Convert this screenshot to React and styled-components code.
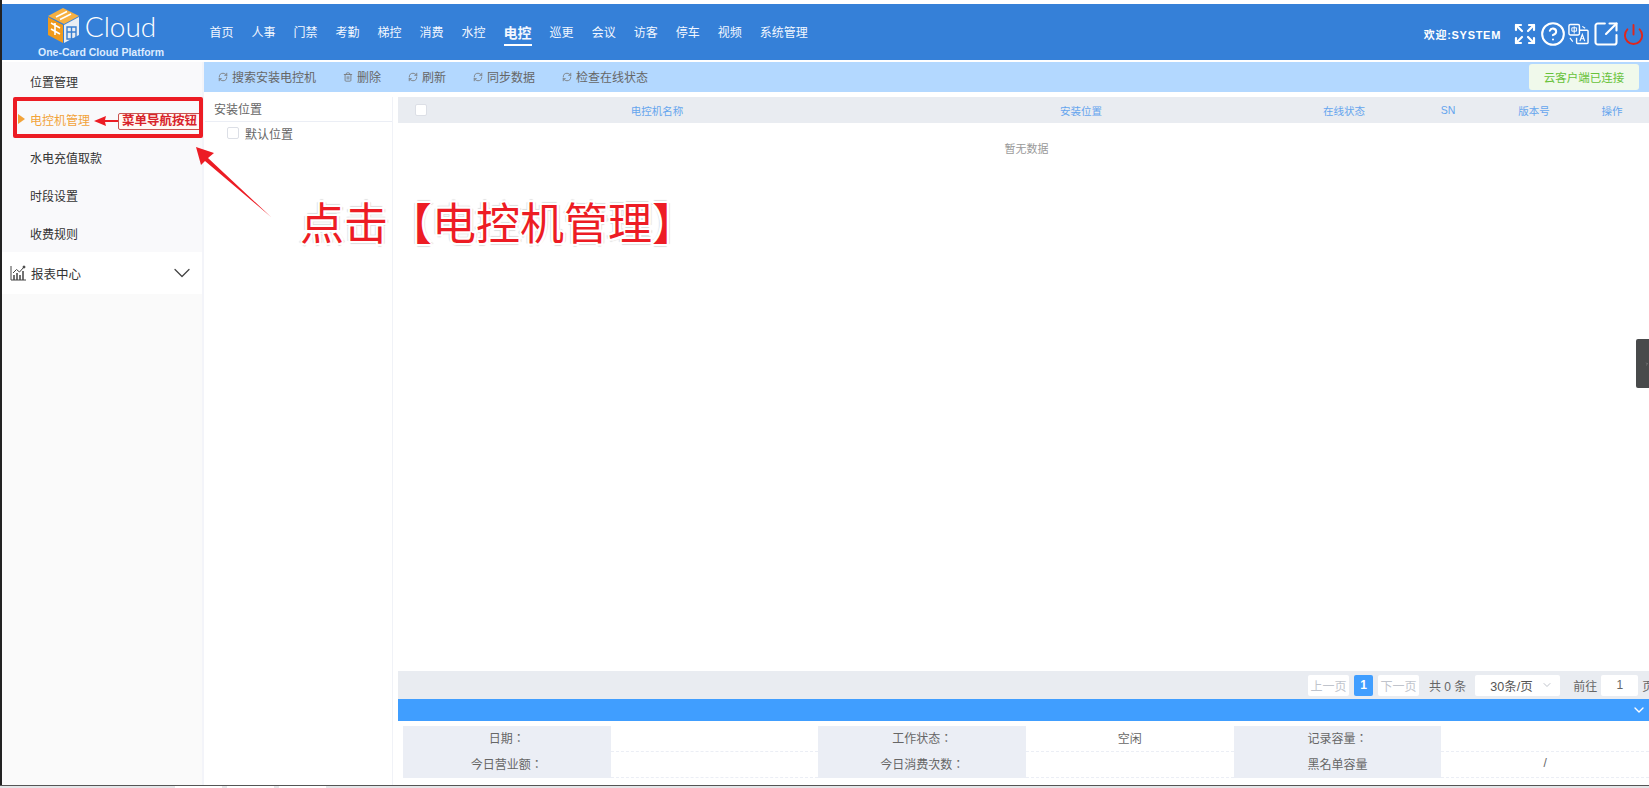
import React from "react";
import styled, { createGlobalStyle } from "styled-components";
import {
  Expand,
  CircleHelp,
  SquareArrowOutUpRight,
  Power,
  RefreshCw,
  Trash2,
  ChevronDown,
  ChevronRight,
} from "lucide-react";

const navItems = ["首页", "人事", "门禁", "考勤", "梯控", "消费", "水控", "电控", "巡更", "会议", "访客", "停车", "视频", "系统管理"];
const menuItems = ["位置管理", "电控机管理", "水电充值取款", "时段设置", "收费规则"];

const GlobalStyle = createGlobalStyle`
  html, body {
    margin: 0;
    padding: 0;
    background: #fff;
    overflow: hidden;
  }
  * {
    box-sizing: border-box;
  }
  body {
    font-family: "Liberation Sans", "Noto Sans CJK SC", sans-serif;
    font-size: 12px;
  }
`;

const Page = styled.div`
  position: relative;
  width: 1649px;
  height: 788px;
  overflow: hidden;
`;

const Shell = styled.div`
  width: 100%;
  height: 100%;
  display: flex;
  flex-direction: column;
  padding-top: 4px;
  border-left: 2px solid #222;
`;

const Header = styled.header`
  height: 56px;
  flex: none;
  display: flex;
  align-items: flex-start;
  background: #3580d8;
  color: #fff;
`;

const Brand = styled.div`
  width: 198px;
  flex: none;
  display: flex;
  flex-direction: column;
  align-items: center;
  padding-top: 4px;
`;

const BrandTop = styled.div`
  height: 35px;
  margin-left: 2px;
  display: flex;
  align-items: center;
  gap: 6px;
`;

const CloudWord = styled.span`
  font-family: "Lato", "Liberation Sans", sans-serif;
  font-weight: 300;
  font-size: 28px;
  line-height: 32px;
  color: #fff;
`;

const Slogan = styled.div`
  margin-top: 2px;
  font-size: 10.5px;
  line-height: 14px;
  font-weight: 700;
  color: #dcecff;
  white-space: nowrap;
`;

const Nav = styled.nav`
  margin-left: 9.5px;
  height: 100%;
  display: flex;
  align-items: center;
  gap: 18px;
`;

const NavItem = styled.a`
  font-size: ${(p) => (p.$active ? "14px" : "12px")};
  font-weight: ${(p) => (p.$active ? 700 : 400)};
  line-height: 20px;
  padding: 8px 0 1px;
  margin-top: -4px;
  color: #f2f7ff;
  border-bottom: 2px solid ${(p) => (p.$active ? "#fff" : "transparent")};
  white-space: nowrap;
`;

const HeaderRight = styled.div`
  margin-left: auto;
  height: 100%;
  display: flex;
  align-items: center;
  padding: 4px 4px 0 0;
`;

const Welcome = styled.span`
  font-size: 11px;
  font-weight: 700;
  letter-spacing: 0.7px;
  margin-right: 12px;
  white-space: nowrap;
`;

const IconRow = styled.div`
  display: flex;
  align-items: center;
  gap: 2.5px;
`;

const Body = styled.div`
  flex: 1;
  min-height: 0;
  margin-top: 2px;
  display: flex;
`;

const Sidebar = styled.aside`
  width: 202px;
  flex: none;
  background: #fafafa;
  border-right: 2px solid #f3f4f9;
`;

const MenuItem = styled.div`
  position: relative;
  height: 38px;
  padding-left: 28px;
  display: flex;
  align-items: center;
  color: ${(p) => (p.$active ? "#f2a33a" : "#333")};
  background: #f9f9fb;

  ${(p) =>
    p.$active &&
    `&::before {
      content: "";
      position: absolute;
      left: 16px;
      top: 14px;
      border-left: 7px solid #f2a33a;
      border-top: 5px solid transparent;
      border-bottom: 5px solid transparent;
    }`}
`;

const MenuGroup = styled.div`
  height: 42px;
  background: #fff;
  display: flex;
  align-items: center;
  padding: 0 6px 0 8px;
  font-size: 12.5px;
  color: #333;
`;

const GroupLabel = styled.span`
  margin-left: 5px;
  flex: 1;
`;

const Content = styled.div`
  flex: 1;
  min-width: 0;
  display: flex;
  flex-direction: column;
`;

const Toolbar = styled.div`
  height: 30px;
  flex: none;
  display: flex;
  align-items: center;
  background: #b3d8ff;
  padding: 0 10px 1px 10px;
  color: #666;
`;

const ToolButton = styled.span`
  display: inline-flex;
  align-items: center;
  gap: 4px;
  margin-right: 27px;
  margin-left: ${(p) => (p.$first ? "4px" : "0")};
  white-space: nowrap;

  svg {
    color: #777;
  }
`;

const CloudBadge = styled.span`
  margin-left: auto;
  width: 110px;
  height: 26px;
  display: flex;
  align-items: center;
  justify-content: center;
  border-radius: 3px;
  background: #f0f9eb;
  color: #67c23a;
  font-size: 11.5px;
`;

const Panels = styled.div`
  flex: 1;
  min-height: 0;
  display: flex;
  margin-top: 5px;
`;

const TreePanel = styled.div`
  width: 187px;
  flex: none;
  margin-left: 1px;
  margin-right: 6px;
  background: #fff;
  box-shadow: 1px 0 0 #f0f2f7;
`;

const TreeHead = styled.div`
  height: 25px;
  line-height: 22px;
  padding: 2px 0 0 9px;
  color: #666;
  border-bottom: 1px solid #ebeef5;
`;

const TreeRow = styled.div`
  height: 22px;
  display: flex;
  align-items: center;
  gap: 6px;
  padding-left: 22px;
  color: #666;
`;

const CheckBox = styled.span`
  width: 12px;
  height: 12px;
  flex: none;
  border: 1px solid #dcdfe6;
  border-radius: 2px;
  background: #fff;
`;

const Main = styled.div`
  flex: 1;
  min-width: 0;
  overflow: hidden;
  display: flex;
  flex-direction: column;
  padding-bottom: 10px;
`;

const TableHead = styled.div`
  width: 1257px;
  height: 26px;
  flex: none;
  display: grid;
  grid-template-columns: 45px 428px 420px 106px 102px 70px 86px;
  align-items: center;
  background: #e9ecf1;
  color: #65a5ee;
  font-size: 10.5px;
  text-align: center;
`;

const CheckCell = styled.div`
  display: flex;
  justify-content: center;
`;

const EmptyArea = styled.div`
  width: 1257px;
  flex: 1;
  min-height: 0;
  padding-top: 17px;
  text-align: center;
  font-size: 11px;
  color: #999;
`;

const Pager = styled.div`
  width: 1257px;
  height: 28px;
  flex: none;
  display: flex;
  align-items: center;
  background: #e9ecf1;
  padding-left: 910px;
  color: #666;
`;

const PageButton = styled.span`
  width: ${(p) => (p.$current ? "19px" : "41px")};
  height: 21px;
  margin-right: 5px;
  display: flex;
  align-items: center;
  justify-content: center;
  border-radius: 2px;
  background: ${(p) => (p.$current ? "#409eff" : "#fff")};
  color: ${(p) => (p.$current ? "#fff" : "#c0c4cc")};
  font-weight: ${(p) => (p.$current ? 700 : 400)};
`;

const PagerText = styled.span`
  margin-left: ${(p) => p.$left || 0}px;
  white-space: nowrap;
`;

const PageSelect = styled.span`
  width: 85px;
  height: 21px;
  margin-left: 9px;
  padding: 0 7px 0 15px;
  display: flex;
  align-items: center;
  justify-content: space-between;
  background: #fff;
  border-radius: 2px;
  font-size: 12.5px;
  color: #555;

  svg {
    color: #c0c4cc;
  }
`;

const PageInput = styled.span`
  width: 37px;
  height: 21px;
  margin: 0 4px;
  display: flex;
  align-items: center;
  justify-content: center;
  background: #fff;
  border-radius: 2px;
`;

const InfoBar = styled.div`
  height: 22px;
  flex: none;
  display: flex;
  align-items: center;
  justify-content: flex-end;
  padding-right: 2px;
  background: #409eff;
  color: #fff;
`;

const InfoTable = styled.div`
  margin: 5px 0 0 5px;
  display: grid;
  grid-template-columns: repeat(6, 1fr);
  grid-auto-rows: 26px;
  flex: none;
`;

const InfoLabel = styled.div`
  display: flex;
  align-items: center;
  justify-content: center;
  padding-bottom: 3px;
  background: #ebeef5;
  color: #666;
  font-family: "Liberation Sans", "Noto Sans CJK TC", sans-serif;
`;

const InfoValue = styled.div`
  display: flex;
  align-items: center;
  justify-content: center;
  padding-bottom: 3px;
  color: #666;
  border-bottom: 1px dashed #ebeef5;
`;

const BottomEdge = styled.div`
  position: absolute;
  left: 0;
  right: 0;
  bottom: 0;
  height: 3px;
  display: flex;
  gap: 5px;
  padding-left: 175px;
  background: #e4e6e8;
  border-top: 1px solid #555;
`;

const BottomTab = styled.span`
  width: 47px;
  height: 2px;
  background: #fff;
`;

const SideHandle = styled.div`
  position: absolute;
  right: 0;
  top: 339px;
  width: 13px;
  height: 49px;
  padding-left: 9px;
  display: flex;
  align-items: center;
  background: #484a4b;
  border-radius: 2px 0 0 2px;
  color: #ddd;
`;

const Annotations = styled.svg`
  position: absolute;
  left: 0;
  top: 0;
  width: 1649px;
  height: 788px;
  pointer-events: none;
`;

const RedFrame = styled.div`
  position: absolute;
  left: 13px;
  top: 97px;
  width: 190px;
  height: 41px;
  border: 4px solid #ec1c24;
  border-radius: 2px;
  overflow: hidden;
`;

const MenuTag = styled.span`
  position: absolute;
  left: 101px;
  top: 12px;
  width: 90px;
  height: 17px;
  padding-left: 3px;
  border: 1px solid #c9524f;
  border-radius: 2px;
  background: #fff8f4;
  color: #d8232a;
  font-size: 12.5px;
  font-weight: 700;
  line-height: 15px;
  white-space: nowrap;
`;

const BigCallout = styled.div`
  position: absolute;
  left: 300px;
  top: 193px;
  font-family: "Noto Sans CJK SC", sans-serif;
  font-size: 44px;
  line-height: 56px;
  color: #ed1c24;
  white-space: nowrap;
  text-shadow: 2px 0 0 #fff, -2px 0 0 #fff, 0 2px 0 #fff, 0 -2px 0 #fff,
    2px 2px 0 #fff, -2px 2px 0 #fff, 2px -2px 0 #fff, -2px -2px 0 #fff,
    3px 0 1px #ddd, -3px 0 1px #ddd, 0 3px 1px #ddd, 0 -3px 1px #ddd;
`;

const CubeLogo = () => (
  <svg width="31" height="35" viewBox="0 0 31 35">
    <polygon points="15,0 31,8 16,16 0,8" fill="#f6b042" />
    <polygon points="0,9 15,17 15,35 0,27" fill="#f09a1c" />
    <polygon points="16,17 31,9 31,27 16,35" fill="#e9edf2" />
    <path d="M8 9 L19 3.5 M12 11.5 L23 6" stroke="#fff" strokeWidth="1.6" />
    <path d="M3 15 L12 20 M7 15 V27 M3 21 L12 26" stroke="#fff" strokeWidth="1.6" fill="none" />
    <path d="M19 19 H28 V31 H19 Z M19 24 H28 M23.500 19 V31" stroke="#3a7fd0" strokeWidth="1.4" fill="none" />
  </svg>
);

const TranslateIcon = () => (
  <svg width="21" height="23" viewBox="0 0 22 23" fill="none" stroke="#fff" strokeWidth="1.5">
    <rect x="1" y="1" width="11" height="11" rx="1.500" />
    <path d="M12 7 H20 a1 1 0 0 1 1 1 V20 a1 1 0 0 1 -1 1 H10 a1 1 0 0 1 -1 -1 V15" />
    <path d="M4 4.500 H9 V8 H4 Z M6.500 3 V10.500" strokeWidth="1" />
    <path d="M12.500 18.500 L15 11.500 L17.500 18.500 M13.500 16 H16.500" strokeWidth="1.200" />
    <path d="M2 15 L5 19 M15 3 L18 5" strokeWidth="1.200" />
  </svg>
);

const ChartIcon = () => (
  <svg width="16" height="16" viewBox="0 0 16 16" fill="none" stroke="#444" strokeWidth="1">
    <path d="M1 1 V15 H16" />
    <path d="M4 15 V10 M7 15 V8 M10 15 V10 M13 15 V6" strokeWidth="1.500" />
    <path d="M3 8 L6.500 4.500 L9.500 7 L14 2" />
    <circle cx="14" cy="2" r="1" fill="#444" />
  </svg>
);

const App = () => {
  return (
    <Page>
      <GlobalStyle />
      <Shell>
        <Header>
          <Brand>
            <BrandTop>
              <CubeLogo />
              <CloudWord>Cloud</CloudWord>
            </BrandTop>
            <Slogan>One-Card Cloud Platform</Slogan>
          </Brand>
          <Nav>
            {navItems.map((item) => (
              <NavItem key={item} $active={item === "电控"}>
                {item}
              </NavItem>
            ))}
          </Nav>
          <HeaderRight>
            <Welcome>欢迎:SYSTEM</Welcome>
            <IconRow>
              <Expand size={24} strokeWidth={2.2} />
              <CircleHelp size={26} strokeWidth={1.9} />
              <TranslateIcon />
              <SquareArrowOutUpRight size={28} strokeWidth={1.8} />
              <Power size={23} strokeWidth={2} color="#e1261c" />
            </IconRow>
          </HeaderRight>
        </Header>
        <Body>
          <Sidebar>
            {menuItems.map((item) => (
              <MenuItem key={item} $active={item === "电控机管理"}>
                {item}
              </MenuItem>
            ))}
            <MenuGroup>
              <ChartIcon />
              <GroupLabel>报表中心</GroupLabel>
              <ChevronDown size={28} strokeWidth={1.1} color="#444" />
            </MenuGroup>
          </Sidebar>
          <Content>
            <Toolbar>
              <ToolButton $first>
                <RefreshCw size={10} />
                搜索安装电控机
              </ToolButton>
              <ToolButton>
                <Trash2 size={10} />
                删除
              </ToolButton>
              <ToolButton>
                <RefreshCw size={10} />
                刷新
              </ToolButton>
              <ToolButton>
                <RefreshCw size={10} />
                同步数据
              </ToolButton>
              <ToolButton>
                <RefreshCw size={10} />
                检查在线状态
              </ToolButton>
              <CloudBadge>云客户端已连接</CloudBadge>
            </Toolbar>
            <Panels>
              <TreePanel>
                <TreeHead>安装位置</TreeHead>
                <TreeRow>
                  <CheckBox />
                  默认位置
                </TreeRow>
              </TreePanel>
              <Main>
                <TableHead>
                  <CheckCell>
                    <CheckBox />
                  </CheckCell>
                  <span>电控机名称</span>
                  <span>安装位置</span>
                  <span>在线状态</span>
                  <span>SN</span>
                  <span>版本号</span>
                  <span>操作</span>
                </TableHead>
                <EmptyArea>暂无数据</EmptyArea>
                <Pager>
                  <PageButton>上一页</PageButton>
                  <PageButton $current>1</PageButton>
                  <PageButton>下一页</PageButton>
                  <PagerText $left={5}>共 0 条</PagerText>
                  <PageSelect>
                    30条/页
                    <ChevronDown size={12} />
                  </PageSelect>
                  <PagerText $left={13}>前往</PagerText>
                  <PageInput>1</PageInput>
                  <PagerText>页</PagerText>
                </Pager>
                <InfoBar>
                  <ChevronDown size={16} />
                </InfoBar>
                <InfoTable>
                  <InfoLabel>日期：</InfoLabel>
                  <InfoValue />
                  <InfoLabel>工作状态：</InfoLabel>
                  <InfoValue>空闲</InfoValue>
                  <InfoLabel>记录容量：</InfoLabel>
                  <InfoValue />
                  <InfoLabel>今日营业额：</InfoLabel>
                  <InfoValue />
                  <InfoLabel>今日消费次数：</InfoLabel>
                  <InfoValue />
                  <InfoLabel>黑名单容量</InfoLabel>
                  <InfoValue>/</InfoValue>
                </InfoTable>
              </Main>
            </Panels>
          </Content>
        </Body>
      </Shell>
      <BottomEdge>
        <BottomTab />
        <BottomTab />
        <BottomTab />
      </BottomEdge>
      <SideHandle>
        <ChevronRight size={8} />
      </SideHandle>
      <RedFrame>
        <MenuTag>菜单导航按钮</MenuTag>
      </RedFrame>
      <Annotations viewBox="0 0 1649 788">
        <polygon points="94,121 106,116 105,120 118,120 118,122 105,122 106,126" fill="#ec1c24" />
        <polygon points="196,147 214,153 208,158 271,217 205,161 201,165" fill="#ec1c24" />
      </Annotations>
      <BigCallout>点击【电控机管理】</BigCallout>
    </Page>
  );
};

export default App;
